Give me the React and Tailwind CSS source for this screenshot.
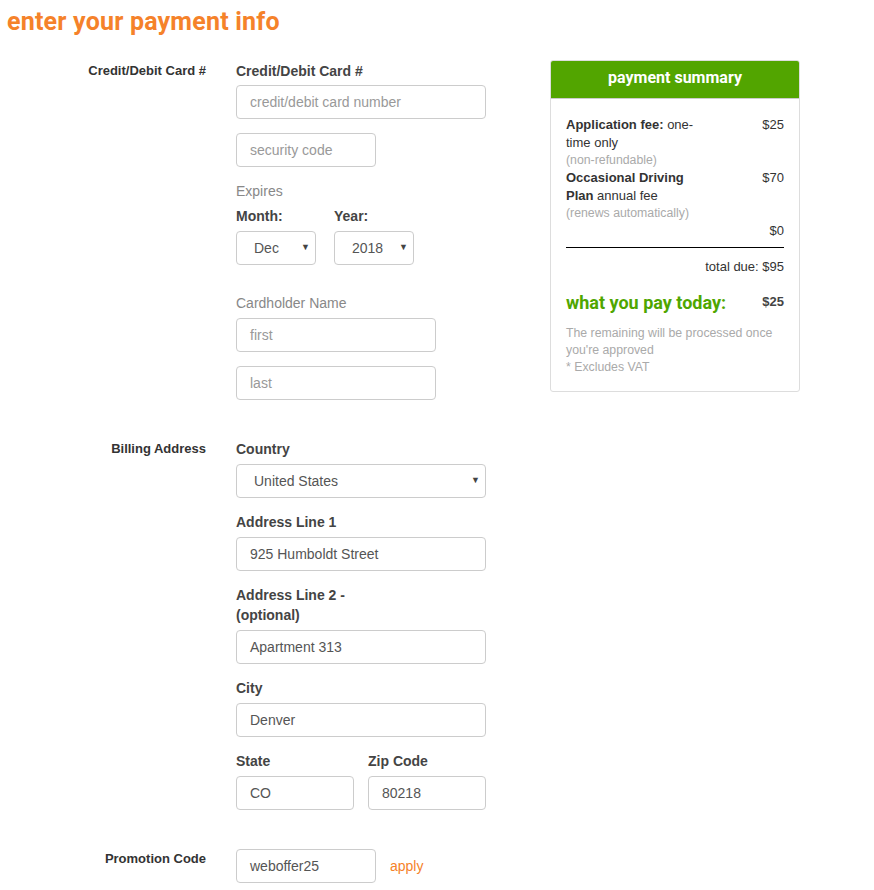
const Label = ({ children }) => (
  <div className="text-[14px] leading-[20px] font-bold text-[#444]">{children}</div>
);

const Input = ({ value, placeholder, w = "w-[250px]" }) => (
  <div
    className={`${w} h-[34px] border border-[#ccc] rounded-[4px] bg-white flex items-center pl-[13px] text-[14px] ${
      value ? "text-[#555]" : "text-[#999]"
    }`}
  >
    {value || placeholder}
  </div>
);

const Select = ({ value, w, pl = "pl-[17px]" }) => (
  <div
    className={`${w} h-[34px] border border-[#ccc] rounded-[4px] bg-white flex items-center justify-between ${pl} pr-[5px] text-[14px] text-[#555]`}
  >
    <span>{value}</span>
    <span className="text-[9px] text-[#444]">▼</span>
  </div>
);

const Row = ({ label, children, className = "" }) => (
  <div className={`flex ${className}`}>
    <div className="w-[206px] text-right text-[13px] leading-[20px] font-bold text-[#333]">{label}</div>
    <div className="ml-[30px] w-[250px] flex flex-col">{children}</div>
  </div>
);

const Summary = () => (
  <div className="w-[250px] border border-[#ddd] rounded-[3px] bg-white overflow-hidden">
    <div
      className="h-[38px] pb-[3px] bg-[#52a500] border-b border-[#ccc] flex items-center justify-center text-white text-[16px] font-bold"
      style={{ fontFamily: "Roboto, sans-serif" }}
    >
      payment summary
    </div>
    <div className="px-[15px] pt-[17px] pb-[15px] text-[13px] text-[#333]">
      <div className="flex justify-between leading-[18px]">
        <div className="w-[131px]">
          <b>Application fee:</b> one-time only
        </div>
        <div>$25</div>
      </div>
      <div className="text-[12.3px] leading-[17px] text-[#aaa]">(non-refundable)</div>
      <div className="flex justify-between leading-[18px]">
        <div className="w-[131px]">
          <b>Occasional Driving Plan</b> annual fee
        </div>
        <div>$70</div>
      </div>
      <div className="text-[12.3px] leading-[17px] text-[#aaa]">(renews automatically)</div>
      <div className="text-right leading-[18px]">$0</div>
      <div className="mt-[7px] border-t border-black"></div>
      <div className="mt-[10px] text-right leading-[18px]">total due: $95</div>
      <div className="mt-[13px] flex justify-between items-center">
        <div className="text-[18px] font-bold text-[#4fa600]" style={{ fontFamily: "Roboto, sans-serif" }}>
          what you pay today:
        </div>
        <div className="font-bold text-[#444] -mt-[2px]">$25</div>
      </div>
      <div className="mt-[9px] text-[12.3px] leading-[17px] text-[#aaa]">
        The remaining will be processed once you're approved
        <br />* Excludes VAT
      </div>
    </div>
  </div>
);

export default function App() {
  return (
    <div className="w-[874px] min-h-[890px] bg-white" style={{ fontFamily: '"Liberation Sans", Arial, sans-serif' }}>
      <h1
        className="pl-[7px] pt-[7px] text-[25px] leading-[30px] font-bold tracking-[0.2px] text-[#f5822a]"
        style={{ fontFamily: "Roboto, sans-serif" }}
      >
        enter your payment info
      </h1>
      <div className="flex mt-[23px]">
        <div className="w-[486px] pt-[1px]">
          <Row label="Credit/Debit Card #">
            <Label>Credit/Debit Card #</Label>
            <div className="mt-[4px]">
              <Input placeholder="credit/debit card number" />
            </div>
            <div className="mt-[14px]">
              <Input placeholder="security code" w="w-[140px]" />
            </div>
            <div className="mt-[14px] text-[14px] leading-[20px] text-[#888]">Expires</div>
            <div className="mt-[5px] flex gap-[18px]">
              <div>
                <Label>Month:</Label>
                <div className="mt-[5px]">
                  <Select value="Dec" w="w-[80px]" />
                </div>
              </div>
              <div>
                <Label>Year:</Label>
                <div className="mt-[5px]">
                  <Select value="2018" w="w-[80px]" />
                </div>
              </div>
            </div>
            <div className="mt-[28px] text-[14px] leading-[20px] text-[#888]">Cardholder Name</div>
            <div className="mt-[5px]">
              <Input placeholder="first" w="w-[200px]" />
            </div>
            <div className="mt-[14px]">
              <Input placeholder="last" w="w-[200px]" />
            </div>
          </Row>

          <Row label="Billing Address" className="mt-[39px]">
            <Label>Country</Label>
            <div className="mt-[5px]">
              <Select value="United States" w="w-[250px]" />
            </div>
            <div className="mt-[14px]">
              <Label>Address Line 1</Label>
            </div>
            <div className="mt-[5px]">
              <Input value="925 Humboldt Street" />
            </div>
            <div className="mt-[14px] w-[130px]">
              <Label>Address Line 2 - (optional)</Label>
            </div>
            <div className="mt-[5px]">
              <Input value="Apartment 313" />
            </div>
            <div className="mt-[14px]">
              <Label>City</Label>
            </div>
            <div className="mt-[5px]">
              <Input value="Denver" />
            </div>
            <div className="mt-[14px] flex gap-[14px]">
              <div>
                <Label>State</Label>
                <div className="mt-[5px]">
                  <Input value="CO" w="w-[118px]" />
                </div>
              </div>
              <div>
                <Label>Zip Code</Label>
                <div className="mt-[5px]">
                  <Input value="80218" w="w-[118px]" />
                </div>
              </div>
            </div>
          </Row>

          <Row label="Promotion Code" className="mt-[39px]">
            <div className="flex items-center gap-[14px]">
              <Input value="weboffer25" w="w-[140px]" />
              <span className="text-[14px] text-[#f5822a]">apply</span>
            </div>
          </Row>
        </div>
        <div className="ml-[64px]">
          <Summary />
        </div>
      </div>
    </div>
  );
}
